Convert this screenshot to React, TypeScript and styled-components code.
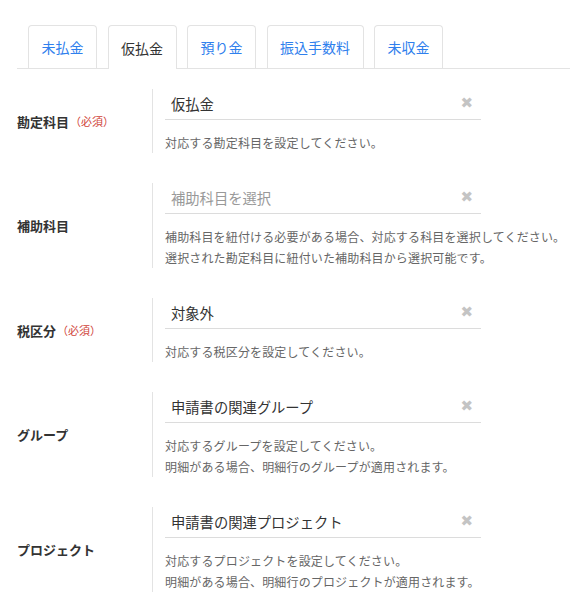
import React from "react";
import styled, { createGlobalStyle } from "styled-components";

const Global = createGlobalStyle`
  html, body { margin: 0; padding: 0; background: #fff; }
  body { font-family: "Noto Sans CJK JP", "Noto Sans", sans-serif; color: #333; }
`;

const Page = styled.div`
  padding: 25px 0 0 17px;
`;

const TabBar = styled.div`
  display: flex;
  gap: 10.5px;
  padding-left: 11px;
  border-bottom: 1px solid #e3e3e3;
`;

const Tab = styled.div<{ $active?: boolean }>`
  padding: 0 12.5px;
  display: flex;
  align-items: center;
  font-size: 14px;
  border: 1px solid #e3e3e3;
  border-bottom: none;
  border-radius: 4px 4px 0 0;
  margin-bottom: ${(p) => (p.$active ? "-1px" : "0")};
  height: ${(p) => (p.$active ? "43px" : "42px")};
  background: #fff;
  color: ${(p) => (p.$active ? "#333" : "#2f80ed")};
`;

const Form = styled.div`
  display: flex;
  flex-direction: column;
  gap: 30px;
  padding-top: 20px;
`;

const Row = styled.div`
  display: flex;
`;

const Label = styled.div`
  width: 135px;
  display: flex;
  align-items: center;
  font-size: 13px;
  font-weight: 700;
  color: #333;
`;

const Required = styled.span`
  font-size: 11px;
  font-weight: 400;
  color: #d0453a;
  margin-left: 1px;
`;

const Field = styled.div`
  border-left: 1px solid #e3e3e3;
  padding-left: 12px;
`;

const Select = styled.div<{ $placeholder?: boolean }>`
  width: 316px;
  height: 31px;
  box-sizing: border-box;
  border-bottom: 1px solid #dcdcdc;
  display: flex;
  align-items: center;
  justify-content: space-between;
  padding: 0 8px 2px 6px;
  font-size: 14.3px;
  color: ${(p) => (p.$placeholder ? "#999" : "#333")};
`;

const Clear = styled.span`
  color: #c4c4c4;
  font-size: 15px;
  font-weight: 700;
  font-family: "DejaVu Sans", sans-serif;
`;

const Help = styled.div`
  margin-top: 12px;
  font-size: 12px;
  line-height: 21px;
  letter-spacing: 0.15px;
  color: #666;
`;

type FieldDef = {
  label: string;
  required?: boolean;
  value: string;
  placeholder?: boolean;
  help: string[];
};

const fields: FieldDef[] = [
  { label: "勘定科目", required: true, value: "仮払金", help: ["対応する勘定科目を設定してください。"] },
  {
    label: "補助科目",
    value: "補助科目を選択",
    placeholder: true,
    help: [
      "補助科目を紐付ける必要がある場合、対応する科目を選択してください。",
      "選択された勘定科目に紐付いた補助科目から選択可能です。",
    ],
  },
  { label: "税区分", required: true, value: "対象外", help: ["対応する税区分を設定してください。"] },
  {
    label: "グループ",
    value: "申請書の関連グループ",
    help: ["対応するグループを設定してください。", "明細がある場合、明細行のグループが適用されます。"],
  },
  {
    label: "プロジェクト",
    value: "申請書の関連プロジェクト",
    help: ["対応するプロジェクトを設定してください。", "明細がある場合、明細行のプロジェクトが適用されます。"],
  },
];

const tabs = ["未払金", "仮払金", "預り金", "振込手数料", "未収金"];

export default function App() {
  return (
    <Page>
      <Global />
      <TabBar>
        {tabs.map((t) => (
          <Tab key={t} $active={t === "仮払金"}>
            {t}
          </Tab>
        ))}
      </TabBar>
      <Form>
        {fields.map((f) => (
          <Row key={f.label}>
            <Label>
              {f.label}
              {f.required && <Required>（必須）</Required>}
            </Label>
            <Field>
              <Select $placeholder={f.placeholder}>
                <span>{f.value}</span>
                <Clear>✖</Clear>
              </Select>
              <Help>
                {f.help.map((h) => (
                  <div key={h}>{h}</div>
                ))}
              </Help>
            </Field>
          </Row>
        ))}
      </Form>
    </Page>
  );
}
